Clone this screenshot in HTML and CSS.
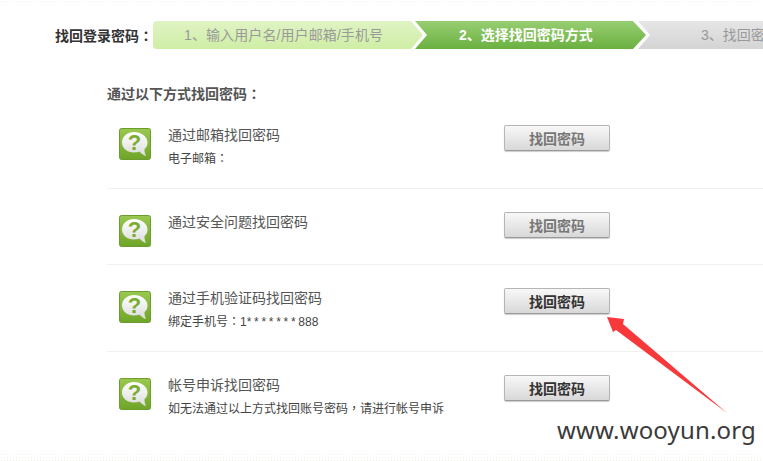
FILE: index.html
```html
<!DOCTYPE html>
<html lang="zh-CN">
<head>
    <meta charset="UTF-8">
    <title>找回登录密码</title>
    <link rel="stylesheet" href="styles.css">
</head>
<body>
    <svg width="0" height="0" class="defs">
        <defs>
            <linearGradient id="iconGreen" x1="0" y1="0" x2="0" y2="1">
                <stop offset="0" stop-color="#9ac850"/>
                <stop offset="1" stop-color="#6ea528"/>
            </linearGradient>
            <linearGradient id="bubble" x1="0" y1="0" x2="0" y2="1">
                <stop offset="0" stop-color="#ffffff"/>
                <stop offset="1" stop-color="#dcdcdc"/>
            </linearGradient>
            <symbol id="helpIcon" viewBox="0 0 32 32">
                <rect x="0.5" y="0.5" width="31" height="31" rx="2" fill="url(#iconGreen)" stroke="#6b9c2c"/>
                <path d="M15 4C8.500 4 3 8.500 3 14.500C3 20.500 8.500 24.500 15 24.500C17 24.500 19 24.200 20.500 23.600C22 25.500 25 27.800 27 28C26 26 25.300 23 25.500 21C27.500 19.500 28.500 17 28.500 14.500C28.500 8.500 22 4 15 4Z" fill="url(#bubble)"/>
                <text x="15.500" y="22" class="icon-mark">?</text>
            </symbol>
        </defs>
    </svg>

    <div class="dots dots-top"></div>

    <div class="steps">
        <div class="steps-label">找回登录密码<span class="punct" lang="zh-TW">：</span></div>
        <div class="step step-done">1、输入用户名/用户邮箱/手机号</div>
        <div class="step step-active">2、选择找回密码方式</div>
        <div class="step step-next">3、找回密码</div>
    </div>

    <div class="content">
        <h3 class="content-title">通过以下方式找回密码<span class="punct" lang="zh-TW">：</span></h3>

        <div class="method">
            <svg class="method-icon"><use href="#helpIcon"/></svg>
            <div class="method-text">
                <div class="method-name">通过邮箱找回密码</div>
                <div class="method-desc">电子邮箱<span class="punct" lang="zh-TW">：</span></div>
            </div>
            <button class="btn btn-off">找回密码</button>
        </div>

        <div class="method">
            <svg class="method-icon"><use href="#helpIcon"/></svg>
            <div class="method-text">
                <div class="method-name">通过安全问题找回密码</div>
            </div>
            <button class="btn btn-off">找回密码</button>
        </div>

        <div class="method">
            <svg class="method-icon"><use href="#helpIcon"/></svg>
            <div class="method-text">
                <div class="method-name">通过手机验证码找回密码</div>
                <div class="method-desc">绑定手机号<span class="punct" lang="zh-TW">：</span>1<span class="stars">*******</span>888</div>
            </div>
            <button class="btn">找回密码</button>
        </div>

        <div class="method method-last">
            <svg class="method-icon"><use href="#helpIcon"/></svg>
            <div class="method-text">
                <div class="method-name">帐号申诉找回密码</div>
                <div class="method-desc">如无法通过以上方式找回账号密码<span class="punct" lang="zh-TW">，</span>请进行帐号申诉</div>
            </div>
            <button class="btn">找回密码</button>
        </div>
    </div>

    <div class="dots dots-bottom"></div>

    <svg class="arrow" width="763" height="461" viewBox="0 0 763 461">
        <path d="M607 317L624 319L623 324L727 413L616 330L613 332Z" fill="#f8393c"/>
    </svg>
    <div class="watermark">www.wooyun.org</div>
</body>
</html>
```

FILE: styles.css
```css
html, body {
    height: 100%;
}

body {
    margin: 0;
    position: relative;
    overflow: hidden;
    background: #fff;
    color: #555;
    font-family: "Liberation Sans", "Noto Sans CJK SC", sans-serif;
    font-size: 14px;
}

.defs {
    position: absolute;
}

/* centred colon and comma, as the original font draws them */
.punct {
    font-family: "Noto Sans CJK TC", sans-serif;
    line-height: 1;
}

.stars {
    letter-spacing: 2.7px;
}

.dots {
    height: 3px;
    background-image: radial-gradient(#eef5e4 0.6px, transparent 0.8px);
    background-size: 3px 3px;
}

.dots-top {
    margin-bottom: 18px;
}

.dots-bottom {
    position: absolute;
    left: 0;
    right: 0;
    bottom: 0;
    height: 8px;
}

.steps {
    display: flex;
    align-items: center;
    height: 28px;
    overflow: hidden;
}

.steps-label {
    flex: none;
    width: 98px;
    margin-left: 55px;
    font-weight: bold;
    white-space: nowrap;
    color: #333;
}

.step {
    flex: none;
    height: 28px;
    line-height: 28px;
    box-sizing: border-box;
    white-space: nowrap;
    clip-path: polygon(0 0, calc(100% - 13px) 0, 100% 50%, calc(100% - 13px) 100%, 0 100%, 12px 50%);
    color: #999;
}

.step-done {
    width: 270px;
    padding-left: 31px;
    border-radius: 4px 0 0 4px;
    background: linear-gradient(#e0f3c4, #cfeea5);
    clip-path: polygon(0 0, calc(100% - 12px) 0, 100% 50%, calc(100% - 12px) 100%, 0 100%);
    color: #9a9a9a;
    letter-spacing: 0.1px;
}

.step-active {
    width: 231px;
    margin-left: -8px;
    padding-left: 44px;
    background: linear-gradient(#98ce72, #6ab040);
    color: #fff;
    font-weight: bold;
}

.step-next {
    width: 160px;
    margin-left: -8px;
    padding-left: 63px;
    background: linear-gradient(#e6e6e6, #d4d4d4);
}

.content {
    margin: 36px 0 0 107px;
    width: 700px;
}

.content-title {
    margin: 0;
    height: 17px;
    line-height: 18px;
    font-size: 14px;
    font-weight: bold;
    color: #555;
}

.method {
    display: flex;
    align-items: flex-start;
    padding: 22px 0 17px;
    border-bottom: 1px solid #f0f0f0;
}

.method-last {
    border-bottom: 0;
}

.method-icon {
    width: 32px;
    height: 32px;
    margin: 4px 17px 0 12px;
    flex: none;
}

.icon-mark {
    font-family: "Liberation Sans", sans-serif;
    font-size: 22px;
    font-weight: bold;
    fill: #7aac2e;
    text-anchor: middle;
}

.method-text {
    width: 336px;
    flex: none;
}

.method-name {
    line-height: 22px;
    color: #555;
}

.method-desc {
    margin-top: 1px;
    line-height: 24px;
    font-size: 12px;
    color: #444;
}

.btn {
    width: 106px;
    height: 26px;
    margin-top: 1px;
    padding: 0;
    border: 1px solid #b5b5b5;
    border-bottom-color: #999;
    border-radius: 2px;
    background: linear-gradient(#f8f8f8, #d8d8d8);
    box-shadow: 0 1px 1px rgba(0,0,0,0.2);
    font-family: inherit;
    font-size: 14px;
    font-weight: bold;
    color: #333;
}

.btn-off {
    color: #777;
}

.arrow {
    position: absolute;
    left: 0;
    top: 0;
}

.watermark {
    position: absolute;
    left: 557px;
    top: 414px;
    font-family: "Noto Sans", sans-serif;
    font-size: 24px;
    line-height: 32px;
    letter-spacing: 0.15px;
    color: #3a3a3a;
}
```
